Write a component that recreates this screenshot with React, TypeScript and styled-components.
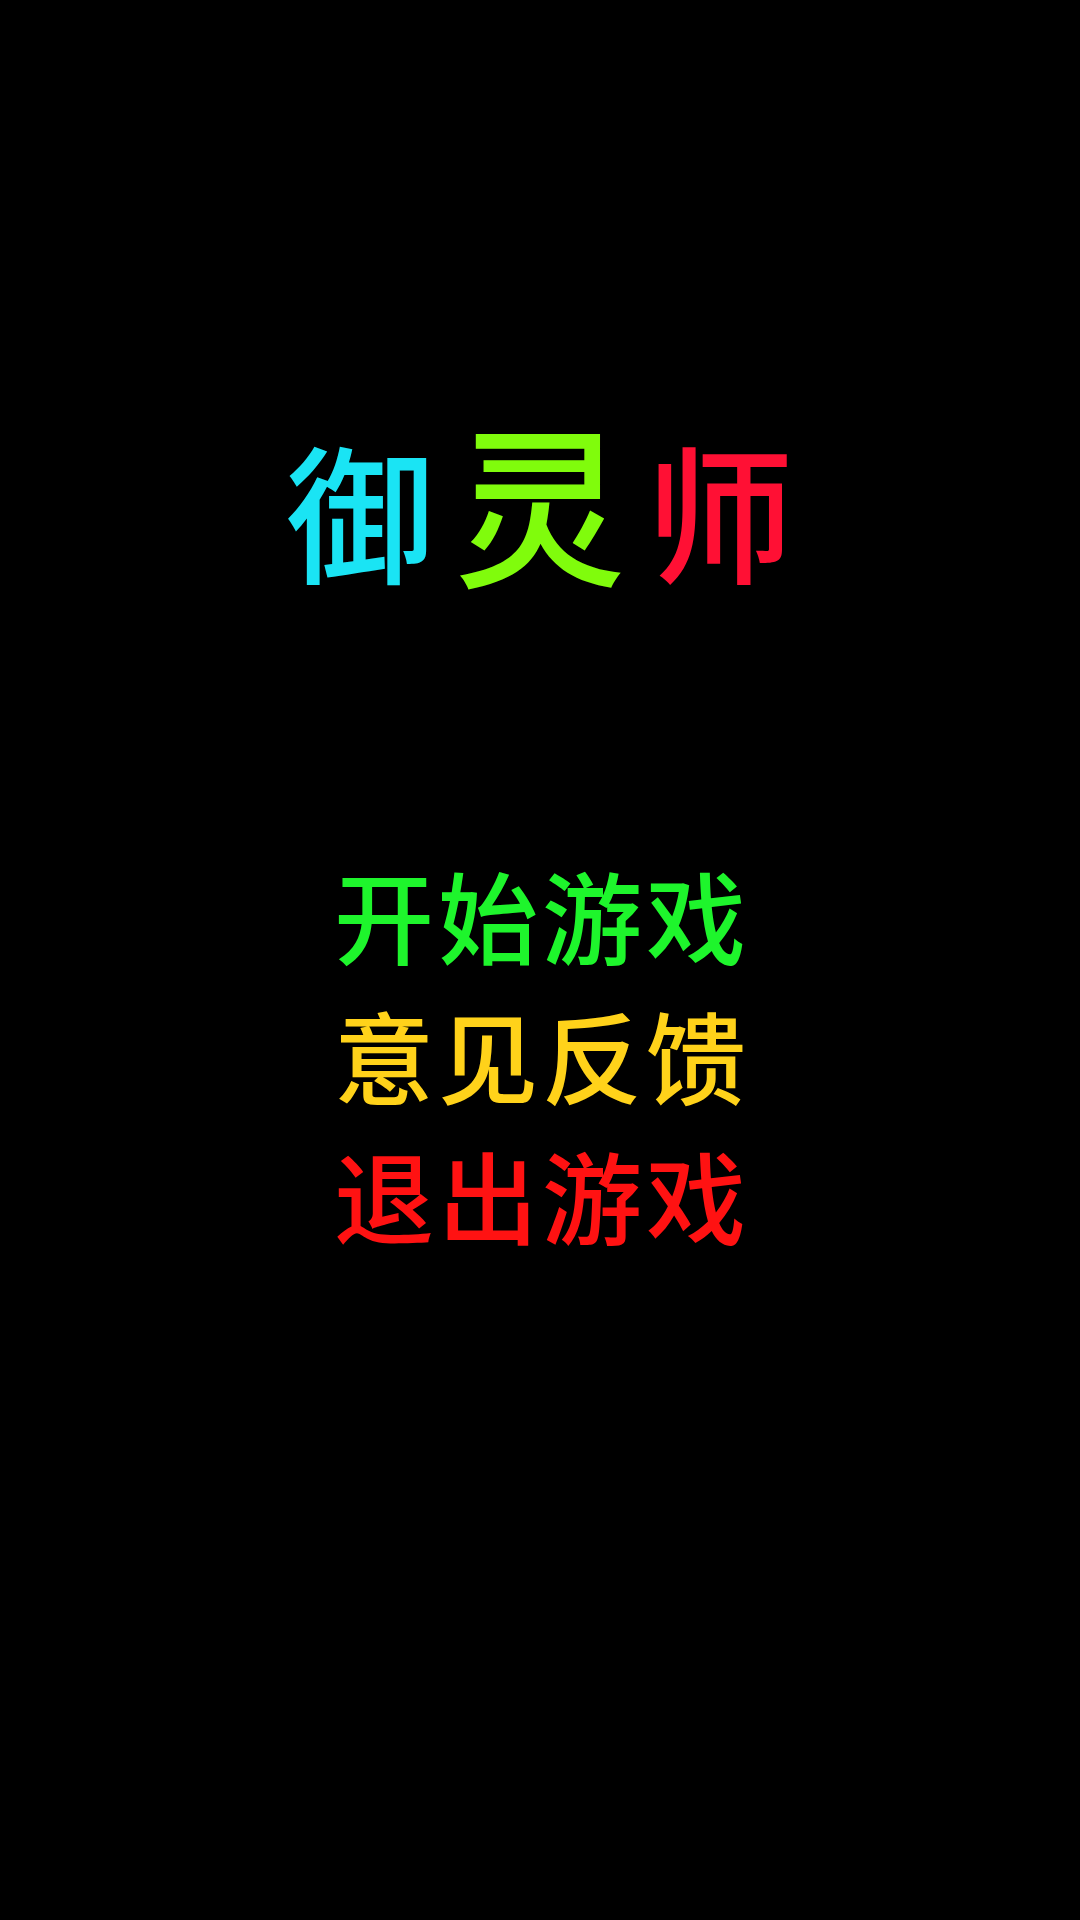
import styled, { createGlobalStyle } from 'styled-components';

const GlobalStyle = createGlobalStyle`
  html, body {
    margin: 0;
    padding: 0;
    background: #000;
  }
  body {
    font-family: "Noto Sans CJK SC", "Noto Sans", sans-serif;
  }
`;

const Screen = styled.div`
  width: 1080px;
  height: 1920px;
  background: #000;
  display: flex;
  flex-direction: column;
  align-items: center;
  padding-top: 420px;
  box-sizing: border-box;
`;

const Title = styled.h1`
  margin: 0;
  display: flex;
  align-items: center;
  gap: 20px;
  height: 176px;
  font-weight: 500;
`;

const TitleChar = styled.span<{ $color: string; $size: number; $lift?: number }>`
  color: ${(p) => p.$color};
  font-size: ${(p) => p.$size}px;
  line-height: 1;
  margin-bottom: ${(p) => p.$lift ?? 0}px;
`;

const Menu = styled.nav`
  margin-top: 248px;
  display: flex;
  flex-direction: column;
  align-items: center;
`;

const MenuItem = styled.button<{ $color: string }>`
  background: none;
  border: none;
  padding: 0;
  cursor: pointer;
  font-family: inherit;
  font-weight: 500;
  font-size: 100px;
  line-height: 140px;
  letter-spacing: 4px;
  margin-right: -4px;
  color: ${(p) => p.$color};
`;

const titleChars = [
  { ch: '御', color: '#1ae4f4', size: 148, lift: 0 },
  { ch: '灵', color: '#80fc0c', size: 172, lift: 20 },
  { ch: '师', color: '#ff1034', size: 148, lift: 0 },
];

const menuItems = [
  { label: '开始游戏', color: '#1ef52c' },
  { label: '意见反馈', color: '#ffd21a' },
  { label: '退出游戏', color: '#ff1212' },
];

const App = () => {
  return (
    <>
      <GlobalStyle />
      <Screen>
        <Title>
          {titleChars.map((c) => (
            <TitleChar key={c.ch} $color={c.color} $size={c.size} $lift={c.lift}>
              {c.ch}
            </TitleChar>
          ))}
        </Title>
        <Menu>
          {menuItems.map((item) => (
            <MenuItem key={item.label} $color={item.color}>
              {item.label}
            </MenuItem>
          ))}
        </Menu>
      </Screen>
    </>
  );
};

export default App;
